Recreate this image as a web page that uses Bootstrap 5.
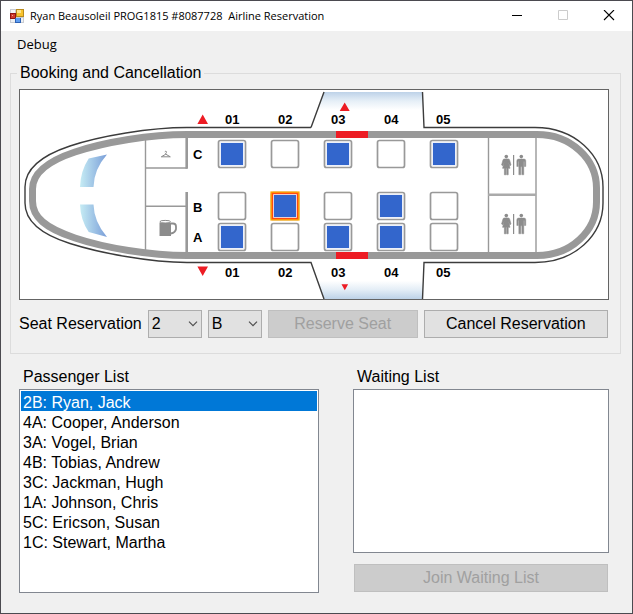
<!DOCTYPE html>
<html lang="en">
<head>
<meta charset="utf-8">
<meta name="viewport" content="width=device-width, initial-scale=1">
<title>Airline Reservation</title>
<link href="https://cdn.jsdelivr.net/npm/bootstrap@5.3.0/dist/css/bootstrap.min.css" rel="stylesheet">
<style>
  body { font: 16px/20px "Liberation Sans", Arial, sans-serif; color: #000; background: #f0f0f0; }
  .app-window { min-height: 100vh; border: 1px solid #4b4a50; background: #f0f0f0; }
  .title-bar { height: 30px; padding-left: 9px; gap: 6px; font: 11px/16px "Open Sans", sans-serif; }
  .title-text { white-space: pre; }
  .caption-btn { width: 46px; height: 30px; border: 0; background: transparent; padding: 0; }
  .menu-strip { height: 25px; margin-bottom: 8px; padding-left: 16px; font: 13px/18px "Open Sans", sans-serif; }
  .menu-strip a { color: #000; }
  .group-box { margin: 0 11px 0 9px; padding: 0 11px 15px 8px; border: 1px solid #dcdcdc; }
  .group-box legend { margin: 0 0 7px -2px; padding: 0 3px; font-size: 16px; line-height: 18px; }
  .cabin { border: 1px solid #646464; background: #fff; margin-bottom: 10px; }
  .cabin-map text { font: bold 13px "Liberation Sans", Arial, sans-serif; fill: #000; }
  .tool-row { gap: 6px; padding-right: 1px; }
  .seat-select { width: 54px; height: 28px; padding: 0 0 0 3px; border: 1px solid #adadad; border-radius: 0; appearance: none; color: #000;
    background: #e1e1e1 url("data:image/svg+xml,%3Csvg xmlns='http://www.w3.org/2000/svg' width='10' height='6'%3E%3Cpath d='M1 .7 5 4.7 9 .7' fill='none' stroke='%23505050' stroke-width='1.2'/%3E%3C/svg%3E") no-repeat right 3px center; }
  .form-btn { height: 28px; padding: 0; border: 1px solid #adadad; border-radius: 0; background: #e1e1e1; color: #000; font-size: 16px; line-height: 20px; }
  .form-btn:disabled { opacity: 1; background: #ccc; border-color: #bfbfbf; color: #a0a0a0; }
  .grow-a { flex: 150 1 0; }
  .grow-b { flex: 185 1 0; }
  .lists { display: grid; grid-template-columns: 300fr 256fr; column-gap: 34px; padding: 13px 23px 20px 18px; }
  .lists label { padding-left: 4px; line-height: 20px; margin-bottom: 2px; }
  .list-box { border: 1px solid #828790; border-radius: 0; background: #fff; padding: 1px; height: 204px; overflow: auto; outline: 0; color: #000; }
  .list-box option { height: 20px; line-height: 17px; padding: 3px 2px 0; color: #000; }
  .list-box option:checked { background: #0078d7 linear-gradient(#0078d7, #0078d7); color: #fff; }
  .list-short { height: 164px; margin-bottom: 11px; }
  .join-btn { margin: 0 1px; }
</style>
</head>
<body>
<div class="app-window d-flex flex-column">
  <header class="title-bar bg-white d-flex align-items-center">
    <svg width="14" height="14" viewBox="0 0 14 14" aria-hidden="true">
      <rect width="14" height="14" fill="#c9ccd2"/>
      <rect x="1" y="1" width="4" height="3" fill="#f4f5f7"/><rect x="1" y="10" width="4" height="3" fill="#eef0f3"/><rect x="11" y="9" width="2" height="4" fill="#eef0f3"/>
      <rect x="6" y="0" width="8" height="8" fill="#b98a1c"/><rect x="7" y="1" width="6" height="6" fill="#f7c32e"/><rect x="7" y="1" width="4" height="3" fill="#fde48c"/>
      <rect x="0" y="4" width="6" height="6" fill="#8f1410"/><rect x="1" y="5" width="4" height="4" fill="#cf3a2c"/><rect x="2" y="6" width="1" height="1" fill="#f2a79c"/>
      <rect x="5" y="9" width="6" height="5" fill="#2d62b5"/><rect x="6" y="9" width="4" height="4" fill="#5f9df0"/>
    </svg>
    <span class="title-text flex-grow-1">Ryan Beausoleil PROG1815 #8087728  Airline Reservation</span>
    <div class="d-flex">
      <button type="button" class="caption-btn" aria-label="Minimize"><svg class="d-block m-auto" width="12" height="12"><path d="M1 5.5H11" stroke="#000"/></svg></button>
      <button type="button" class="caption-btn" aria-label="Maximize" disabled><svg class="d-block m-auto" width="12" height="12"><path d="M1.5.5h9v9h-9z" fill="none" stroke="#ccc"/></svg></button>
      <button type="button" class="caption-btn" aria-label="Close"><svg class="d-block m-auto" width="12" height="12"><path d="M1 0 11 10M11 0 1 10" stroke="#000" stroke-width="1.1"/></svg></button>
    </div>
  </header>
  <nav class="menu-strip d-flex align-items-center"><a class="text-decoration-none" href="#">Debug</a></nav>

  <main>
    <fieldset class="group-box">
      <legend class="float-none w-auto">Booking and Cancellation</legend>
      <div class="cabin">
        <svg class="cabin-map d-block w-100 h-auto" viewBox="20 90 588 209" role="img" aria-label="Seat map">
          <defs>
            <linearGradient id="wingTop" x1="0" y1="0" x2="0" y2="1"><stop offset="0" stop-color="#bdd2e8"/><stop offset=".25" stop-color="#e6eff7"/><stop offset=".5" stop-color="#fff"/></linearGradient>
            <linearGradient id="wingBottom" x1="0" y1="1" x2="0" y2="0"><stop offset="0" stop-color="#bdd2e8"/><stop offset=".25" stop-color="#e3edf6"/><stop offset=".5" stop-color="#fff"/></linearGradient>
            <linearGradient id="glass"><stop offset="0" stop-color="#c6ecf4"/><stop offset="1" stop-color="#7a9ed8"/></linearGradient>
            <g id="seat"><rect x="1" y="1" width="27" height="27" rx="2" fill="#fff" stroke="#999" stroke-width="1.700"/></g>
            <g id="taken"><use href="#seat"/><rect x="2.800" y="2.800" width="23.400" height="23.400" fill="#e4eaf8"/><rect x="3.500" y="3.500" width="22" height="22" fill="#3366cc"/></g>
            <g id="restroom" fill="#8c8c8c">
              <circle cx="506.300" cy="156.600" r="1.800"/>
              <path d="M504.300 159h4q1 0 1.300 1l1.400 5-1.200.8-1.600-4 1.800 6.500h-1.800v6.500h-1.500v-6.500h-.8v6.500h-1.500v-6.500h-1.800l1.800-6.500-1.600 4-1.200-.8 1.400-5q.3-1 1.300-1z" stroke="#8c8c8c" stroke-width=".6"/>
              <path d="M513 155h1.200v20h-1.200z"/>
              <circle cx="521.300" cy="156.600" r="1.800"/>
              <path d="M518.500 159h5.600q1.700 0 1.700 1.700v5.800h-1.500v-5h-.5v13.300h-2v-8h-1v8h-2v-13.300h-.5v5h-1.500v-5.800q0-1.700 1.700-1.700z" stroke="#8c8c8c" stroke-width=".4"/>
            </g>
          </defs>

          <!-- wings and fuselage outline -->
          <path d="M311 128 324 92H422.500L424 128z" fill="url(#wingTop)"/>
          <path d="M311 262.500 324 299H422.500L424 262.500z" fill="url(#wingBottom)"/>
          <g fill="none" stroke="#3c3c3c" stroke-width="1.400">
            <path d="M311 127.500H187C150 127.500 100 136 70 146 40 156 25 170 25 187V203C25 220 40 234 70 243.500 100 253 150 262.500 187 262.500H311L324 299"/>
            <path d="M311 127.500 324 92M422.500 92 424 127.500H535C575 127.500 603 155 603 187V203C603 235 575 262.500 535 262.500H424L422.500 299"/>
          </g>
          <path d="M187 134.500C150 134.500 105 142 75 152 45 162 32.500 174 32.500 189V201C32.500 217 45 228 75 238 105 248 150 255.500 187 255.500H537C571 255.500 596.500 231 596.500 202V188C596.500 159 571 134.500 537 134.500z" fill="none" stroke="#999" stroke-width="7"/>
          <path d="M336 131h32v7h-32zM336 252h32v7h-32z" fill="#ed1c24"/>

          <!-- cockpit windows -->
          <path d="M88.700 158.500 107 154.500Q94 169 93.500 187H80Q80.500 171 88.700 158.500z" fill="url(#glass)"/>
          <path d="M88.700 232 107 237Q94 222 93.500 204.500H80Q80.500 220 88.700 232z" fill="url(#glass)"/>

          <!-- interior walls -->
          <g fill="none" stroke="#999">
            <path d="M145.500 140V250M488.500 137V253M536 137V253" stroke-width="1.400"/>
            <path d="M145 168H187M145 206.200H187" stroke-width="1.600"/>
            <path d="M186.700 137V168.700M186.700 192V253" stroke-width="2.600"/>
            <path d="M488 194.700H536" stroke="#aaa" stroke-width="2.600"/>
          </g>

          <!-- wardrobe and galley -->
          <path d="M164.800 151.800q1.200-1.400 1.700 0 .2.800-.7 1.300v1.200M165.800 154.200l4.500 2.600H161.300z" fill="none" stroke="#888" stroke-width="1"/>
          <path d="M159.500 222.500h11.500V236h-11.500z" fill="#8c8c8c"/>
          <ellipse cx="165.200" cy="221.700" rx="5.300" ry="1.300" fill="#fff" stroke="#8c8c8c"/>
          <path d="M171 223.500h2q3 0 3 3v2.500q-.5 3.500-5 4.500" fill="none" stroke="#8c8c8c" stroke-width="1.800"/>

          <use href="#restroom"/><use href="#restroom" y="59"/>

          <!-- row C, B, A seats -->
          <use href="#taken" x="217.500" y="139.500"/><use href="#seat" x="270.500" y="139.500"/><use href="#taken" x="323.500" y="139.500"/><use href="#seat" x="376.500" y="139.500"/><use href="#taken" x="429.500" y="139.500"/>
          <use href="#seat" x="217.500" y="191.500"/><use href="#taken" x="270.500" y="191.500"/><use href="#seat" x="323.500" y="191.500"/><use href="#taken" x="376.500" y="191.500"/><use href="#seat" x="429.500" y="191.500"/>
          <use href="#taken" x="217.500" y="222.500"/><use href="#seat" x="270.500" y="222.500"/><use href="#taken" x="323.500" y="222.500"/><use href="#taken" x="376.500" y="222.500"/><use href="#seat" x="429.500" y="222.500"/>
          <rect x="271.200" y="192.200" width="27.600" height="27.600" fill="none" stroke="#ffa800" stroke-width="1.600"/>
          <rect x="272.500" y="193.500" width="25" height="25" fill="none" stroke="#ff4a12" stroke-width="1.400"/>

          <path d="M202.700 114.500 208 124h-10.600zM344.700 102.500l5 8.500h-10zM197.400 266.500H208L202.700 276zM341.500 284.300h6.600l-3.300 5.900z" fill="#ed1c24"/>

          <text x="225" y="124">01</text><text x="278" y="124">02</text><text x="331" y="124">03</text><text x="384" y="124">04</text><text x="436" y="124">05</text>
          <text x="225" y="277">01</text><text x="278" y="277">02</text><text x="331" y="277">03</text><text x="384" y="277">04</text><text x="436" y="277">05</text>
          <text x="193" y="159">C</text><text x="193" y="212">B</text><text x="193" y="242">A</text>
        </svg>
      </div>
      <div class="tool-row d-flex align-items-center">
        <label for="seatRow">Seat Reservation</label>
        <select id="seatRow" class="seat-select"><option>1</option><option selected>2</option><option>3</option><option>4</option><option>5</option></select>
        <select id="seatLetter" class="seat-select" aria-label="Seat letter"><option>A</option><option selected>B</option><option>C</option></select>
        <button type="button" class="btn form-btn grow-a" disabled>Reserve Seat</button>
        <button type="button" class="btn form-btn grow-b">Cancel Reservation</button>
      </div>
    </fieldset>

    <div class="lists">
      <div class="d-flex flex-column">
        <label for="passengers">Passenger List</label>
        <select id="passengers" class="list-box" size="10">
          <option selected>2B: Ryan, Jack</option>
          <option>4A: Cooper, Anderson</option>
          <option>3A: Vogel, Brian</option>
          <option>4B: Tobias, Andrew</option>
          <option>3C: Jackman, Hugh</option>
          <option>1A: Johnson, Chris</option>
          <option>5C: Ericson, Susan</option>
          <option>1C: Stewart, Martha</option>
        </select>
      </div>
      <div class="d-flex flex-column">
        <label for="waiting">Waiting List</label>
        <select id="waiting" class="list-box list-short" size="8"></select>
        <button type="button" class="btn form-btn join-btn" disabled>Join Waiting List</button>
      </div>
    </div>
  </main>
</div>
<script src="https://cdn.jsdelivr.net/npm/bootstrap@5.3.0/dist/js/bootstrap.bundle.min.js"></script>
</body>
</html>
